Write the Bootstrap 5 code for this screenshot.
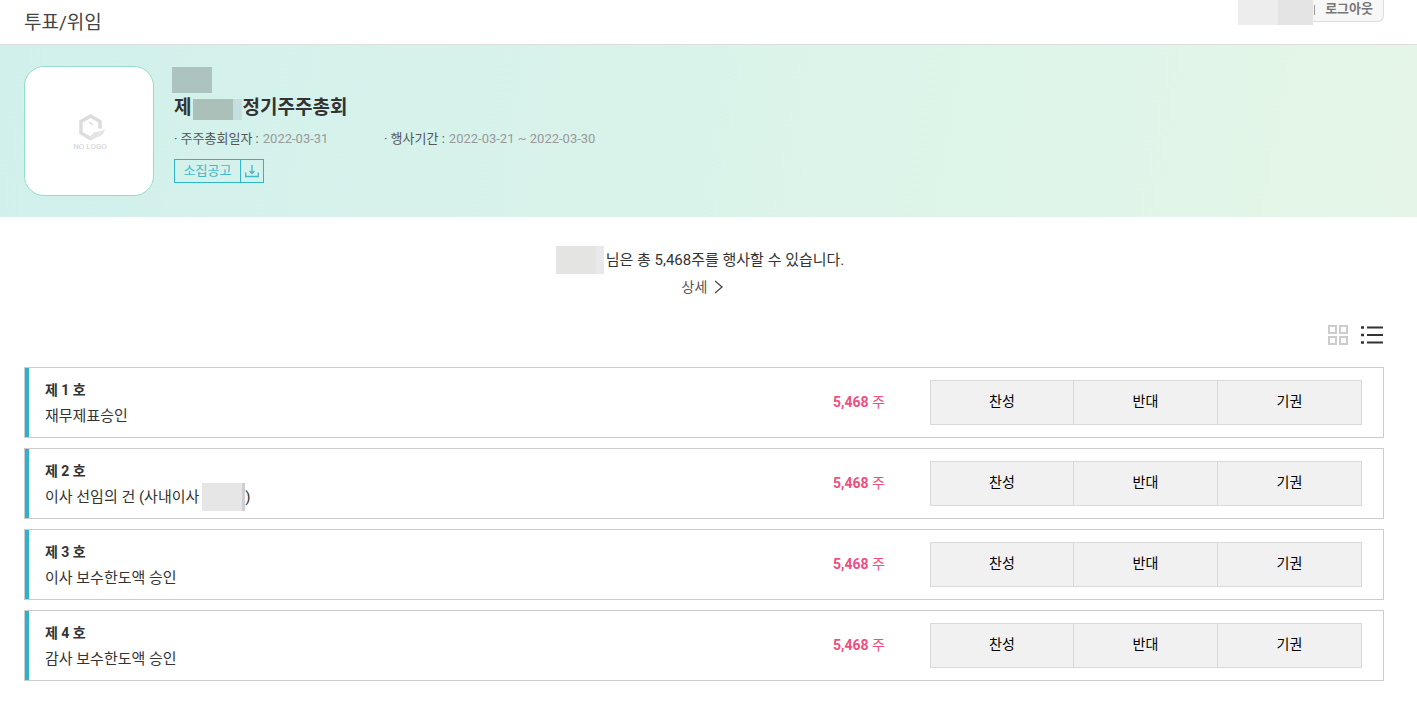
<!DOCTYPE html>
<html lang="ko">
<head>
<meta charset="utf-8">
<meta name="viewport" content="width=device-width, initial-scale=1">
<title>투표/위임</title>
<link href="https://cdn.jsdelivr.net/npm/bootstrap@5.3.0/dist/css/bootstrap.min.css" rel="stylesheet">
<style>
body{font-family:Roboto,"Noto Sans CJK KR",sans-serif;font-size:15px;line-height:24px;color:#333}
.page-x{padding-left:24px;padding-right:33px}
.topbar{height:45px;border-bottom:1px solid #ddd}
.topbar h1{font-size:19px;line-height:46px;font-weight:400;color:#444}
.user-box{height:22px;border:1px solid #ddd;border-top:0;border-radius:0 0 6px 0;border-left:0;background:#f7f7f7;font-size:13px;line-height:18px}
.user-box a{color:#777;font-weight:700;padding:0 10px}
.user-mask{width:75px;height:25px;background:linear-gradient(90deg,#ededed 40px,#e4e4e4 40px)}
.user-sep{width:1px;height:10px;margin:5px 0 0 1px;background:#999}
.hero{height:172px;padding-top:21px;background:linear-gradient(100deg,#d1f0ec,#dff5e9 75%,#e5f6e7)}
.logo-box{width:130px;height:130px;border:1px solid #93dfc4;border-radius:20px;background:#fff}
.company-mask{width:40px;height:26px;margin:1px 0 0 -2px;background:#adc3c0}
.hero h2{font-size:19px;line-height:30px;font-weight:700;margin:0}
.round-mask{width:49px;height:21px;margin:6px 0 0 2px;background:linear-gradient(90deg,#abc0b9 40px,#c5dfe0 40px)}
.facts{line-height:20px;margin-top:6px;font-size:13px;color:#555}
.facts dt{font-weight:400;line-height:20px}
.facts dd{color:#999;margin:0 0 0 4px}
.facts .fact{width:210px;white-space:nowrap}
.notice{width:90px;height:24px;margin-top:10px;padding:0;border:1px solid #2cb8c9;background:transparent;color:#42b7c5;font-size:13px;line-height:22px}
.notice-icon{width:23px;border-left:1px solid #2cb8c9}
.summary{padding-top:29px}
.name-mask{width:48px;height:28px;margin-right:2px;background:linear-gradient(90deg,#e4e4e2 40px,#e9e9ec 40px)}
.summary p{font-size:15px;line-height:28px;margin:0;padding-right:8px}
.summary .detail{font-size:14px;line-height:26px;color:#555;margin-right:3px}
.views{padding-top:23px;height:67px}
.views button{border:0;padding:0;background:none;height:24px}
.agenda{gap:10px}
.agenda-item{height:71px;border:1px solid #ccc;padding-right:21px}
.agenda-item::before{content:"";width:4px;align-self:stretch;background:#30b0cf;margin-right:16px}
.agenda-item h3{font-size:14px;line-height:24px;font-weight:700;margin:0;padding-top:3px}
.agenda-item p{font-size:15px;line-height:28px;margin:0}
.cand-mask{width:43px;height:28px;margin-left:3px;background:linear-gradient(90deg,#e6e6e6 40px,#cfced5 40px)}
.shares{color:#ee4f7f;font-size:14px;margin-right:45px;padding-bottom:2px}
.votes{width:432px;height:45px}
.votes button{flex:0 0 144px;border:1px solid #d9d9d9;background:#f1f1f1;color:#000;font-size:14px;padding:0 0 3px}
.votes button+button{border-left:0}
</style>
</head>
<body>
<header class="topbar page-x d-flex justify-content-between align-items-start">
<h1 class="m-0">투표/위임</h1>
<div class="d-flex align-items-start"><span class="user-mask"></span><div class="user-box d-flex"><span class="user-sep"></span><a href="#" class="text-decoration-none">로그아웃</a></div></div>
</header>
<section class="hero page-x d-flex align-items-start">
<div class="logo-box d-flex align-items-center justify-content-center">
<svg width="38" height="40" viewBox="0 0 38 40" role="img" aria-label="NO LOGO">
<path d="M11 19.500V10.500L20.500 5l9.500 5.500v7M11 18v4l9.500 5.500L30 22" fill="none" stroke="#dcdcdc" stroke-width="3.500"/>
<path d="M25 21q6 0 10-3-1 6-7 8l-7 3-1-4z" fill="#e4e4e4"/><path d="m19 11 4 3" stroke="#dcdcdc" stroke-width="1.500"/>
<text x="20" y="38" text-anchor="middle" font-size="8" fill="#d0d0d0" font-family="Roboto">NO LOGO</text>
</svg></div>
<div class="ms-3 ps-1">
<div class="company-mask"></div>
<h2 class="d-flex">제<span class="round-mask"></span>정기주주총회</h2>
<dl class="facts d-flex mb-0"><div class="fact d-flex"><dt>· 주주총회일자 :</dt><dd>2022-03-31</dd></div><div class="fact d-flex"><dt>· 행사기간 :</dt><dd>2022-03-21 ~ 2022-03-30</dd></div></dl>
<button type="button" class="notice d-flex align-items-stretch"><span class="flex-fill">소집공고</span><span class="notice-icon d-flex align-items-center justify-content-center"><svg width="14" height="14" viewBox="0 0 14 14" fill="none" stroke="#42b7c5" stroke-width="1.300"><path d="M7 1v8M4.500 7 7 9.500 9.500 7M.700 8.500v4h12.600v-4"/></svg></span></button>
</div>
</section>
<main class="page-x">
<section class="summary d-flex flex-column align-items-center">
<p class="d-flex"><span class="name-mask"></span>님은 총 5,468주를 행사할 수 있습니다.</p>
<a href="#" class="detail d-flex align-items-center text-decoration-none">상세<svg class="ms-2" width="8" height="14" viewBox="0 0 8 14" fill="none" stroke="#444" stroke-width="1.3"><path d="m0 1 7 6-7 6"/></svg></a>
</section>
<div class="views d-flex justify-content-end align-items-start">
<button type="button" aria-label="격자 보기"><svg class="d-block" width="21" height="24" viewBox="0 0 21 24" fill="none" stroke="#ccc" stroke-width="2"><path d="M1 3h7v7H1zM12 3h7v7h-7zM1 14h7v7H1zM12 14h7v7h-7z"/></svg></button>
<button type="button" class="ms-2 ps-1" aria-label="목록 보기"><svg class="d-block" width="23" height="24" viewBox="0 0 23 24" fill="none" stroke="#333" stroke-width="2"><path d="M6 4.500h16M6 12h16M6 19.500h16"/><path d="M0 4.500h3M0 12h3M0 19.500h3" stroke-width="2.500"/></svg></button>
</div>
<div class="agenda d-flex flex-column">
<article class="agenda-item d-flex align-items-center"><div class="flex-fill"><h3>제 1 호</h3><p>재무제표승인</p></div><div class="shares"><b>5,468</b> 주</div><div class="votes d-flex"><button type="button">찬성</button><button type="button">반대</button><button type="button">기권</button></div></article>
<article class="agenda-item d-flex align-items-center"><div class="flex-fill"><h3>제 2 호</h3><p class="d-flex">이사 선임의 건 (사내이사<span class="cand-mask"></span>)</p></div><div class="shares"><b>5,468</b> 주</div><div class="votes d-flex"><button type="button">찬성</button><button type="button">반대</button><button type="button">기권</button></div></article>
<article class="agenda-item d-flex align-items-center"><div class="flex-fill"><h3>제 3 호</h3><p>이사 보수한도액 승인</p></div><div class="shares"><b>5,468</b> 주</div><div class="votes d-flex"><button type="button">찬성</button><button type="button">반대</button><button type="button">기권</button></div></article>
<article class="agenda-item d-flex align-items-center"><div class="flex-fill"><h3>제 4 호</h3><p>감사 보수한도액 승인</p></div><div class="shares"><b>5,468</b> 주</div><div class="votes d-flex"><button type="button">찬성</button><button type="button">반대</button><button type="button">기권</button></div></article>
</div>
</main>
<script src="https://cdn.jsdelivr.net/npm/bootstrap@5.3.0/dist/js/bootstrap.bundle.min.js"></script>
</body>
</html>
